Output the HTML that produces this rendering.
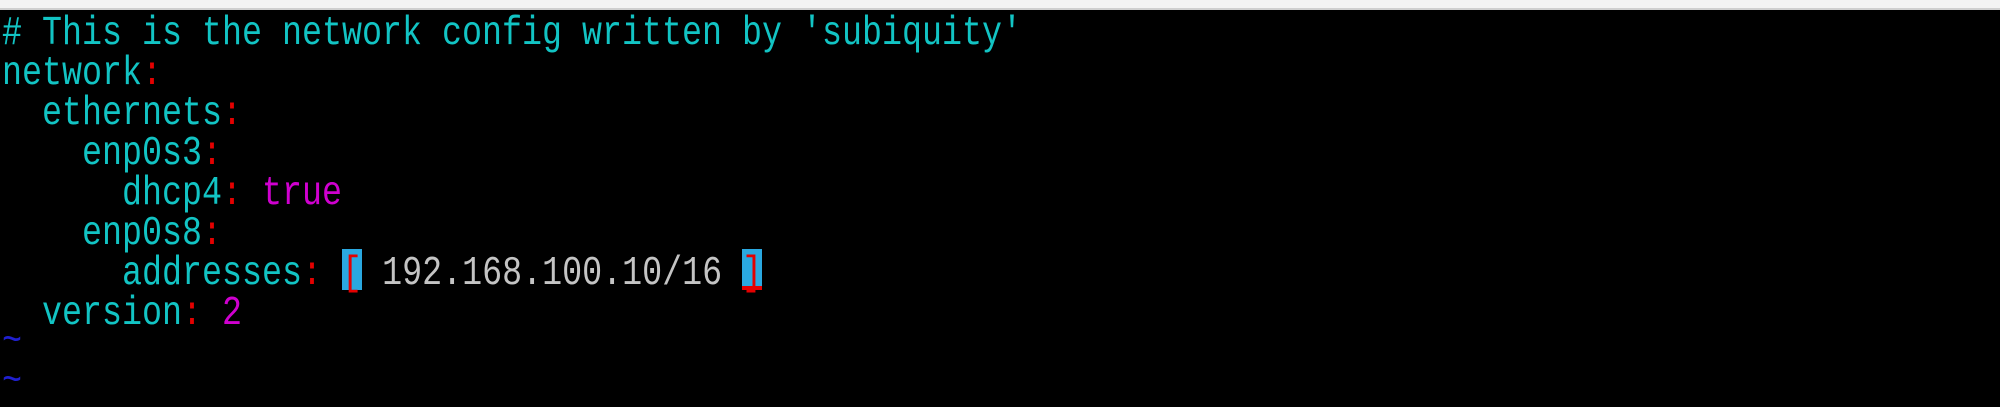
<!DOCTYPE html>
<html><head><meta charset="utf-8"><style>
html,body{margin:0;padding:0;width:2000px;height:400px;overflow:hidden;background:#000;}
.top{position:absolute;left:0;top:0;width:2000px;height:8px;background:#f3f3f3;border-bottom:2px solid #cfcfcf;}
.l{position:absolute;left:2px;height:40px;line-height:40px;font-family:"Liberation Mono",monospace;font-size:33.33px;color:#12c4c4;white-space:pre;transform:scaleY(1.23);transform-origin:0 29px;z-index:2;}
.r{color:#e40000}.m{color:#d000d0}.g{color:#c4c4c4}.b{color:#2020d0}
.box{position:absolute;background:#2aa8e0;width:20px;height:41px;top:249px;z-index:1;}
</style></head><body>
<div class="top"></div>
<div class="box" style="left:342px"></div>
<div class="box" style="left:742px;border-bottom:0"></div>
<div style="position:absolute;left:742px;top:286px;width:20px;height:4px;background:#e40000;z-index:1"></div>
<div class="l" style="top:16px"># This is the network config written by 'subiquity'</div>
<div class="l" style="top:56px">network<span class="r">:</span></div>
<div class="l" style="top:96px">  ethernets<span class="r">:</span></div>
<div class="l" style="top:136px">    enp0s3<span class="r">:</span></div>
<div class="l" style="top:176px">      dhcp4<span class="r">:</span> <span class="m">true</span></div>
<div class="l" style="top:216px">    enp0s8<span class="r">:</span></div>
<div class="l" style="top:256px">      addresses<span class="r">:</span> <span class="r">[</span> <span class="g">192.168.100.10/16</span> <span class="r">]</span></div>
<div class="l" style="top:296px">  version<span class="r">:</span> <span class="m">2</span></div>
<div class="l b" style="top:324px">~</div>
<div class="l b" style="top:364px">~</div>
</body></html>
